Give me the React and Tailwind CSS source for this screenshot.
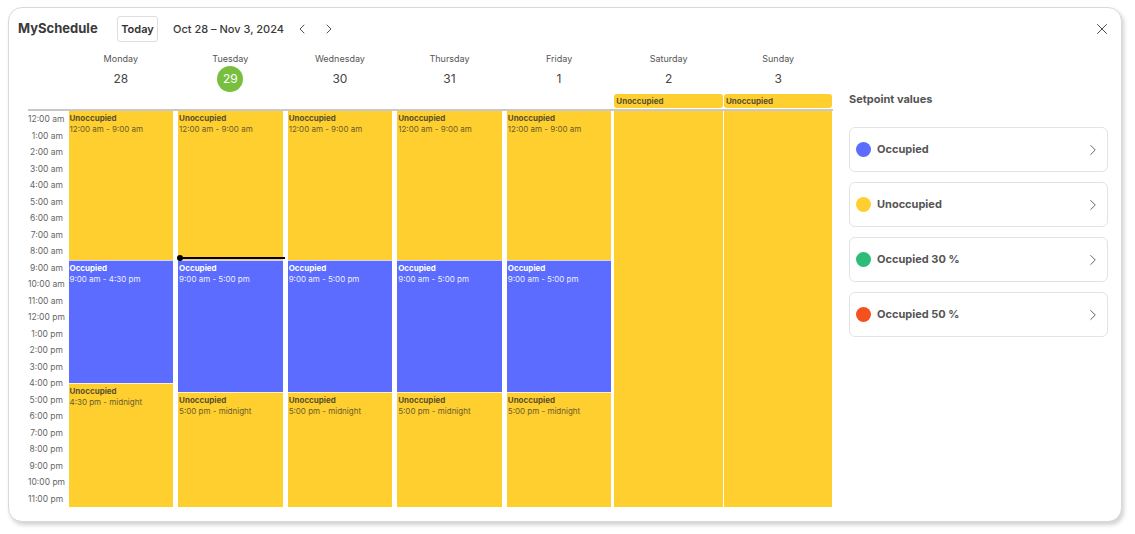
import { ChevronLeft, ChevronRight, X } from "lucide-react";

const days = [
  { name: "Monday", num: "28" },
  { name: "Tuesday", num: "29", today: true },
  { name: "Wednesday", num: "30" },
  { name: "Thursday", num: "31" },
  { name: "Friday", num: "1" },
  { name: "Saturday", num: "2", allDay: true },
  { name: "Sunday", num: "3", allDay: true },
];

const hours = [
  "12:00 am", "1:00 am", "2:00 am", "3:00 am", "4:00 am", "5:00 am",
  "6:00 am", "7:00 am", "8:00 am", "9:00 am", "10:00 am", "11:00 am",
  "12:00 pm", "1:00 pm", "2:00 pm", "3:00 pm", "4:00 pm", "5:00 pm",
  "6:00 pm", "7:00 pm", "8:00 pm", "9:00 pm", "10:00 pm", "11:00 pm",
];

const weekday = [
  { title: "Unoccupied", time: "12:00 am - 9:00 am", hours: 9, kind: "un" },
  { title: "Occupied", time: "9:00 am - 5:00 pm", hours: 8, kind: "occ" },
  { title: "Unoccupied", time: "5:00 pm - midnight", hours: 7, kind: "un" },
];

const monday = [
  { title: "Unoccupied", time: "12:00 am - 9:00 am", hours: 9, kind: "un" },
  { title: "Occupied", time: "9:00 am - 4:30 pm", hours: 7.5, kind: "occ" },
  { title: "Unoccupied", time: "4:30 pm - midnight", hours: 7.5, kind: "un" },
];

const setpoints = [
  { label: "Occupied", dot: "bg-[#5b6cff]" },
  { label: "Unoccupied", dot: "bg-[#fecf2f]" },
  { label: "Occupied 30 %", dot: "bg-[#2dbd78]" },
  { label: "Occupied 50 %", dot: "bg-[#f4511e]" },
];

const ROW = 16.5;

const DayColumn = ({ events, today }) => (
  <div className="relative flex flex-col h-full pl-[2.5px] pr-[2.5px]">
    {events.map((ev, i) => (
      <div
        key={i}
        style={{ height: ev.hours * ROW }}
        className={`${
          ev.kind === "occ"
            ? "bg-[#5b6cff] text-white"
            : "bg-[#fecf2f] text-[#5a4f2e]"
        } ${i > 0 ? "border-t border-white/70" : ""} px-[1px] pt-[1px] overflow-hidden`}
      >
        <div className="text-[8px] font-bold leading-[12px]">{ev.title}</div>
        <div className="text-[8px] leading-[11px] opacity-90">{ev.time}</div>
      </div>
    ))}
    {today && (
      <div className="absolute left-[1px] right-0 top-[144px] flex items-center">
        <div className="w-[6px] h-[6px] rounded-full bg-black" />
        <div className="flex-1 h-[2px] bg-black" />
      </div>
    )}
  </div>
);

export default function App() {
  return (
    <div
      className="w-[1135px] h-[534px] bg-white pt-[7px] pl-[8px]"
      style={{ fontFamily: "Inter, 'Noto Sans', sans-serif" }}
    >
      <div className="w-[1114px] h-[515px] rounded-[14px] border border-[#d9d9d9] shadow-[2px_3px_4px_rgba(0,0,0,0.18)] bg-white flex flex-col">
        {/* header */}
        <div className="flex items-center h-[26px] mt-[8px] pl-[9px] pr-[10px]">
          <div className="text-[13px] font-bold text-[#3a3a3a] w-[99px]">MySchedule</div>
          <button className="h-[26px] w-[41px] border border-[#dedede] rounded-[3px] text-[11px] font-semibold text-[#333]">
            Today
          </button>
          <div className="ml-[15px] text-[11px] font-medium text-[#3a3a3a]">
            Oct 28 – Nov 3, 2024
          </div>
          <ChevronLeft size={16} strokeWidth={1.4} className="ml-[10px] text-[#444]" />
          <ChevronRight size={16} strokeWidth={1.4} className="ml-[11px] text-[#444]" />
          <div className="flex-1" />
          <X size={18} strokeWidth={1.3} className="text-[#444]" />
        </div>

        <div className="flex flex-1 mt-[11px]">
          {/* calendar */}
          <div className="pl-[19px] flex flex-col">
            <div className="flex">
              <div className="w-[38px]" />
              <div className="grid grid-cols-7 w-[767px]">
                {days.map((d) => (
                  <div key={d.name} className="flex flex-col items-center">
                    <div className="text-[9px] text-[#555] leading-[12px]">{d.name}</div>
                    <div className="h-[26px] mt-[1px] flex items-center justify-center">
                      {d.today ? (
                        <div className="w-[26px] h-[26px] rounded-full bg-[#79bf3f] text-white text-[12px] flex items-center justify-center">
                          {d.num}
                        </div>
                      ) : (
                        <div className="text-[12px] text-[#444]">{d.num}</div>
                      )}
                    </div>
                    <div className="h-[15px] mt-[2px] w-full px-[0.5px]">
                      {d.allDay && (
                        <div className="h-[14px] rounded-[3px] bg-[#fecf2f] text-[8px] font-bold text-[#5a4f2e] leading-[14px] px-[2px]">
                          Unoccupied
                        </div>
                      )}
                    </div>
                  </div>
                ))}
              </div>
            </div>
            <div className="h-[2px] bg-[#c8c8c8] w-[805px]" />
            <div className="flex h-[396px]">
              <div className="w-[38px] flex flex-col">
                {hours.map((h) => (
                  <div
                    key={h}
                    className="h-[16.5px] leading-[16.5px] text-[8.5px] text-[#666] text-right pr-[3px] whitespace-nowrap"
                  >
                    {h}
                  </div>
                ))}
              </div>
              <div className="grid grid-cols-7 w-[767px] h-full">
                {days.map((d, i) =>
                  d.allDay ? (
                    <div key={d.name} className="h-full px-[0.5px]">
                      <div className="h-full bg-[#fecf2f]" />
                    </div>
                  ) : (
                    <DayColumn
                      key={d.name}
                      events={i === 0 ? monday : weekday}
                      today={d.today}
                    />
                  )
                )}
              </div>
            </div>
          </div>

          {/* setpoints */}
          <div className="ml-[16px] w-[259px] flex flex-col">
            <div className="mt-[38px] text-[11px] font-bold text-[#555] leading-[16px]">
              Setpoint values
            </div>
            <div className="mt-[20px] flex flex-col gap-[10px]">
              {setpoints.map((s) => (
                <div
                  key={s.label}
                  className="h-[45px] rounded-[6px] border border-[#e3e3e3] flex items-center pl-[6px] pr-[5px]"
                >
                  <div className={`w-[15px] h-[15px] rounded-full ${s.dot}`} />
                  <div className="ml-[6px] text-[11px] font-bold text-[#555]">{s.label}</div>
                  <div className="flex-1" />
                  <ChevronRight size={18} strokeWidth={1.2} className="text-[#555]" />
                </div>
              ))}
            </div>
          </div>
        </div>
      </div>
    </div>
  );
}
